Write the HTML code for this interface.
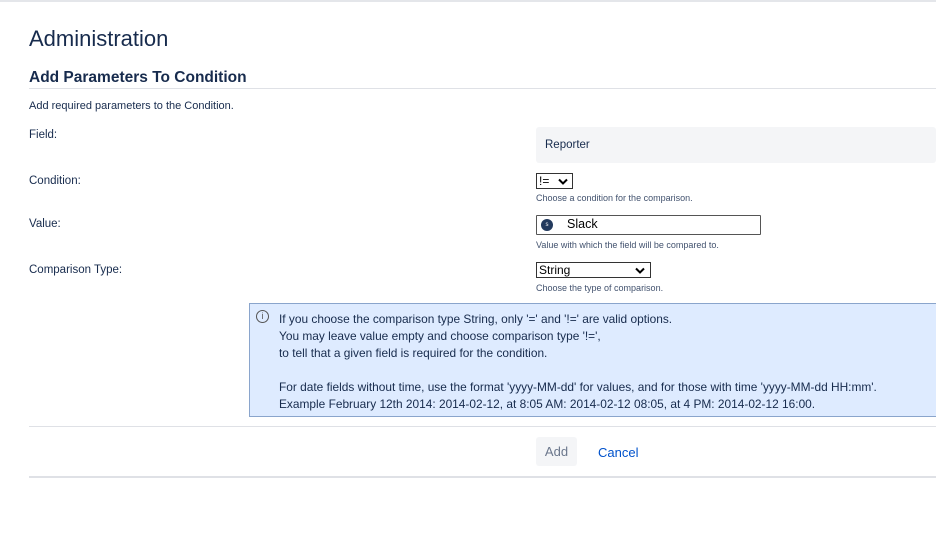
<!DOCTYPE html>
<html><head><meta charset="utf-8"><style>
*{margin:0;padding:0;box-sizing:border-box}
body{width:936px;height:543px;background:#fff;font-family:"Liberation Sans",sans-serif;color:#172b4d;position:relative;overflow:hidden}
.a{position:absolute;white-space:nowrap}
.s{font-size:11.5px;color:#172b4d}
.h{font-size:9px;color:#42526e}
</style></head><body>
<div class="a" style="left:0;top:0;width:936px;height:2px;background:#e4e6ea"></div>
<div class="a" style="left:29px;top:26px;font-size:22px;color:#172b4d">Administration</div>
<div class="a" style="left:29px;top:69px;font-size:15.5px;font-weight:bold;color:#172b4d">Add Parameters To Condition</div>
<div class="a" style="left:29px;top:88px;width:907px;height:1px;background:#dfe1e6"></div>
<div class="a s" style="left:29px;top:100px;font-size:11px">Add required parameters to the Condition.</div>
<div class="a s" style="left:29px;top:129px">Field:</div>
<div class="a" style="left:536px;top:127px;width:400px;height:36px;background:#f4f5f7;border-radius:3px"></div>
<div class="a s" style="left:545px;top:139px">Reporter</div>
<div class="a s" style="left:29px;top:175px">Condition:</div>
<div class="a" style="left:536px;top:173px;width:37px;height:16px;border:1px solid #333;font-size:12px;color:#000;padding-left:2px;line-height:14px">!=<svg style="position:absolute;right:4px;top:4px" width="10" height="7" viewBox="0 0 10 7"><path d="M1 1.5L5 5.5L9 1.5" stroke="#000" stroke-width="2" fill="none"/></svg></div>
<div class="a h" style="left:536px;top:193px">Choose a condition for the comparison.</div>
<div class="a s" style="left:29px;top:218px">Value:</div>
<div class="a" style="left:536px;top:215px;width:225px;height:20px;border:1px solid #555;border-radius:1px"></div>
<div class="a" style="left:541px;top:219px;width:12px;height:12px;border-radius:50%;background:#233a5e;color:#fff;font-size:6px;text-align:center;line-height:12px">s</div>
<div class="a" style="left:567px;top:217px;font-size:12.5px;color:#000">Slack</div>
<div class="a h" style="left:536px;top:240px">Value with which the field will be compared to.</div>
<div class="a s" style="left:29px;top:264px">Comparison Type:</div>
<div class="a" style="left:536px;top:262px;width:115px;height:16px;border:1px solid #333;font-size:12px;color:#000;padding-left:2px;line-height:14px">String<svg style="position:absolute;right:5px;top:4px" width="10" height="7" viewBox="0 0 10 7"><path d="M1 1.5L5 5.5L9 1.5" stroke="#000" stroke-width="2" fill="none"/></svg></div>
<div class="a h" style="left:536px;top:283px">Choose the type of comparison.</div>
<div class="a" style="left:249px;top:303px;width:687px;height:114px;background:#deebff;border:1px solid #8aa5cc;border-right:none"></div>
<div class="a" style="left:256px;top:310px;width:13px;height:13px;border:1px solid #555;border-radius:50%;font-size:9px;text-align:center;line-height:11px;color:#555">i</div>
<div class="a" style="left:279px;top:311px;font-size:11.9px;line-height:17px;color:#172b4d">If you choose the comparison type String, only '=' and '!=' are valid options.<br>You may leave value empty and choose comparison type '!=',<br>to tell that a given field is required for the condition.<br><br>For date fields without time, use the format 'yyyy-MM-dd' for values, and for those with time 'yyyy-MM-dd HH:mm'.<br>Example February 12th 2014: 2014-02-12, at 8:05 AM: 2014-02-12 08:05, at 4 PM: 2014-02-12 16:00.</div>
<div class="a" style="left:29px;top:426px;width:907px;height:1px;background:#dfe1e6"></div>
<div class="a" style="left:536px;top:437px;width:41px;height:29px;background:#f4f5f7;border-radius:3px;font-size:13px;color:#6b778c;text-align:center;line-height:29px">Add</div>
<div class="a" style="left:598px;top:445px;font-size:13px;color:#0052cc">Cancel</div>
<div class="a" style="left:29px;top:476px;width:907px;height:2px;background:#dfe1e6"></div>
</body></html>
